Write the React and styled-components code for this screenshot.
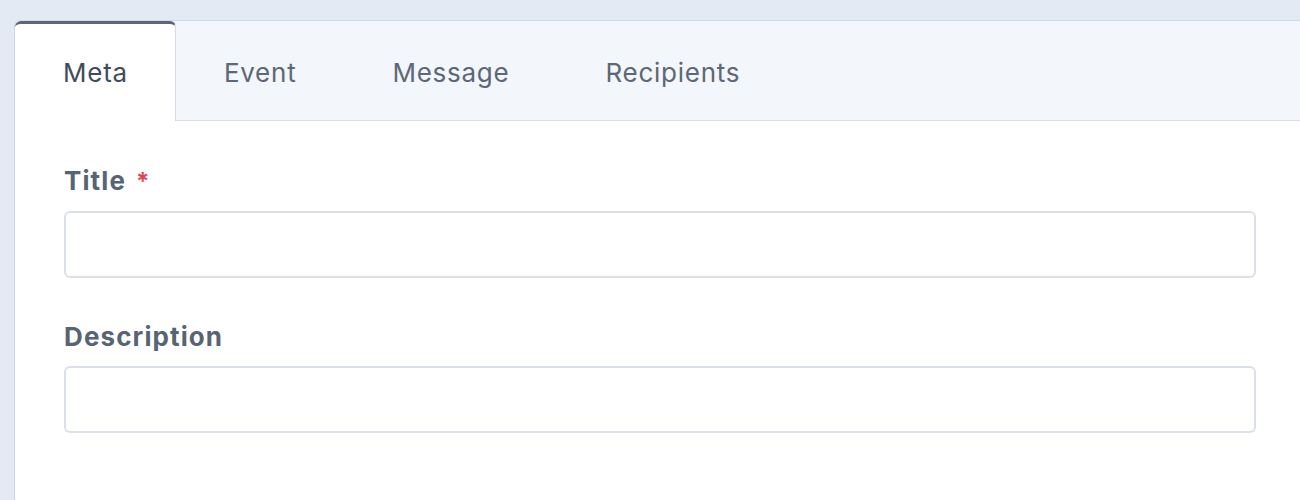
import React, { useState } from "react";
import styled, { createGlobalStyle } from "styled-components";

const GlobalStyle = createGlobalStyle`
  html, body {
    margin: 0;
    padding: 0;
    background: #e4eaf4;
    font-family: Inter, "Noto Sans", sans-serif;
  }
`;

const Page = styled.div`
  padding: 20px 0 0 14px;
  height: 480px;
  overflow: hidden;
`;

const Panel = styled.div`
  background: #ffffff;
  border-left: 1px solid #cdd6e4;
  border-top: 1px solid #d3dbe7;
  border-top-left-radius: 6px;
  height: 100%;
`;

const TabBar = styled.div`
  display: flex;
  height: 99px;
  background: #f3f6fb;
  border-bottom: 1px solid #d8dee8;
  border-top-left-radius: 6px;
`;

const Tab = styled.button`
  display: flex;
  align-items: center;
  padding: 0 47px 0 48px;
  margin-bottom: ${(p) => (p.active ? "-1px" : "0")};
  border: none;
  border-right: 1px solid ${(p) => (p.active ? "#d3dae5" : "transparent")};
  border-top: 3px solid ${(p) => (p.active ? "#5b6677" : "transparent")};
  border-radius: ${(p) => (p.active ? "6px 6px 0 0" : "0")};
  background: ${(p) => (p.active ? "#ffffff" : "transparent")};
  color: ${(p) => (p.active ? "#3f4c5c" : "#5b6878")};
  font-family: Inter, "Noto Sans", sans-serif;
  font-size: 26px;
  letter-spacing: 0.75px;
  cursor: pointer;
`;

const Form = styled.div`
  display: flex;
  flex-direction: column;
  padding: 44px 44px 0 49px;
`;

const Field = styled.div`
  display: flex;
  flex-direction: column;
  gap: 13px;
  margin-bottom: 43px;
`;

const Label = styled.label`
  font-size: 26px;
  line-height: 32px;
  font-weight: 700;
  letter-spacing: 1.1px;
  color: #566474;
`;

const Required = styled.span`
  color: #e0474c;
  font-weight: 700;
  font-size: 24px;
  margin-left: 10px;
`;

const Input = styled.input`
  height: 67px;
  box-sizing: border-box;
  border: 2px solid #dadfea;
  border-radius: 6px;
  background: #ffffff;
  font-family: Inter, "Noto Sans", sans-serif;
  font-size: 22px;
  padding: 0 16px;
  outline: none;
`;

const tabs = ["Meta", "Event", "Message", "Recipients"];

export default function App() {
  const [active, setActive] = useState("Meta");
  return (
    <>
      <GlobalStyle />
      <Page>
        <Panel>
          <TabBar>
            {tabs.map((t) => (
              <Tab key={t} active={t === active} onClick={() => setActive(t)}>
                {t}
              </Tab>
            ))}
          </TabBar>
          <Form>
            <Field>
              <Label>
                Title<Required>*</Required>
              </Label>
              <Input />
            </Field>
            <Field>
              <Label>Description</Label>
              <Input />
            </Field>
          </Form>
        </Panel>
      </Page>
    </>
  );
}
